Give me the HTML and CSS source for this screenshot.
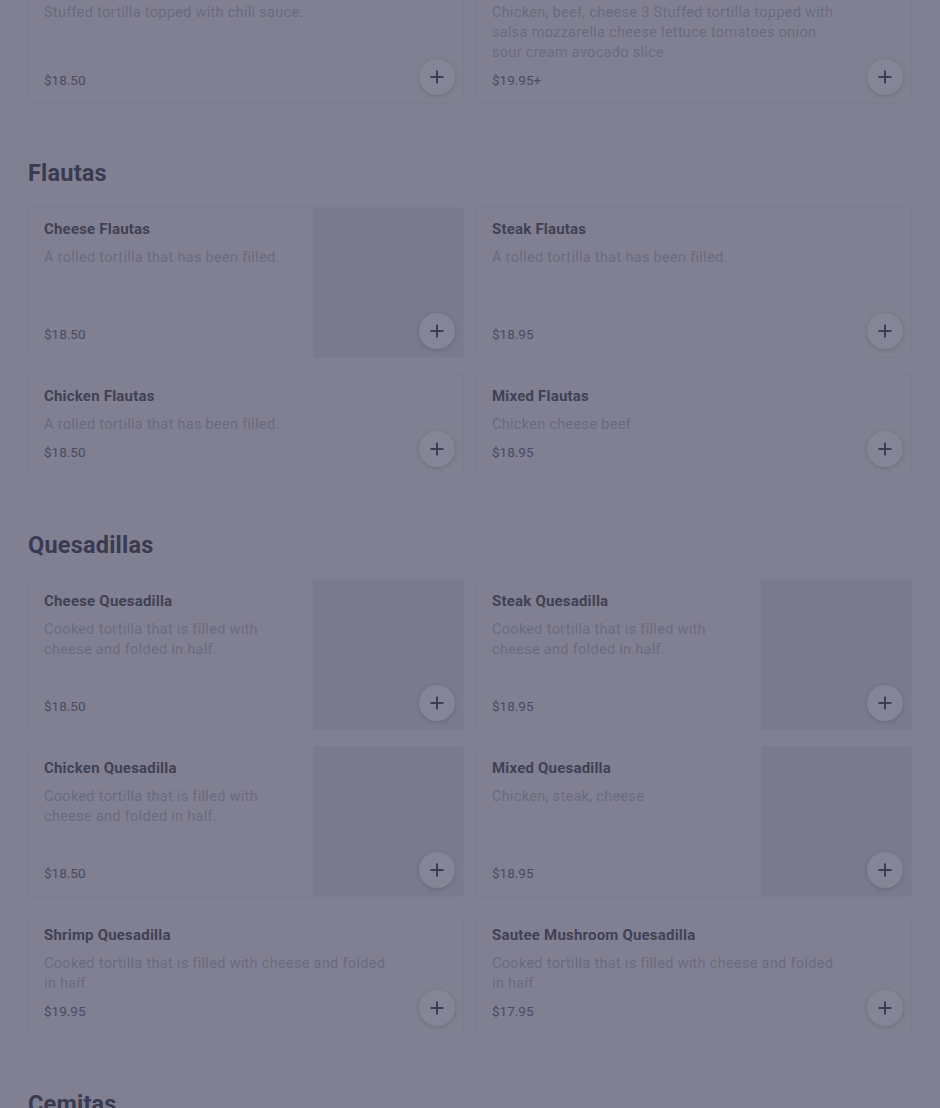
FILE: index.html
```html
<!DOCTYPE html>
<html lang="en">
<head>
<meta charset="utf-8">
<title>Menu</title>
<link rel="stylesheet" href="styles.css">
</head>
<body>
<main class="menu">
  <section class="category category--continued">
    <div class="grid">
      <article class="item">
        <div class="item-body">
          <h3 class="item-name">Cheese Enchiladas</h3>
          <p class="item-desc">Stuffed tortilla topped with chili sauce.</p>
          <p class="item-price">$18.50</p>
        </div>
        <button class="add" aria-label="Add"><svg viewBox="0 0 16 16"><path d="M8 1.5v13M1.5 8h13"/></svg></button>
      </article>
      <article class="item">
        <div class="item-body">
          <h3 class="item-name">Enchiladas Supreme</h3>
          <p class="item-desc">Chicken, beef, cheese 3 Stuffed tortilla topped with salsa mozzarella cheese lettuce tomatoes onion sour cream avocado slice</p>
          <p class="item-price">$19.95+</p>
        </div>
        <button class="add" aria-label="Add"><svg viewBox="0 0 16 16"><path d="M8 1.5v13M1.5 8h13"/></svg></button>
      </article>
    </div>
  </section>

  <section class="category">
    <h2 class="category-title">Flautas</h2>
    <div class="grid">
      <article class="item item--photo">
        <div class="item-body">
          <h3 class="item-name">Cheese Flautas</h3>
          <p class="item-desc">A rolled tortilla that has been filled.</p>
          <p class="item-price">$18.50</p>
        </div>
        <div class="item-photo"></div>
        <button class="add" aria-label="Add"><svg viewBox="0 0 16 16"><path d="M8 1.5v13M1.5 8h13"/></svg></button>
      </article>
      <article class="item">
        <div class="item-body">
          <h3 class="item-name">Steak Flautas</h3>
          <p class="item-desc">A rolled tortilla that has been filled.</p>
          <p class="item-price">$18.95</p>
        </div>
        <button class="add" aria-label="Add"><svg viewBox="0 0 16 16"><path d="M8 1.5v13M1.5 8h13"/></svg></button>
      </article>
      <article class="item">
        <div class="item-body">
          <h3 class="item-name">Chicken Flautas</h3>
          <p class="item-desc">A rolled tortilla that has been filled.</p>
          <p class="item-price">$18.50</p>
        </div>
        <button class="add" aria-label="Add"><svg viewBox="0 0 16 16"><path d="M8 1.5v13M1.5 8h13"/></svg></button>
      </article>
      <article class="item">
        <div class="item-body">
          <h3 class="item-name">Mixed Flautas</h3>
          <p class="item-desc">Chicken cheese beef</p>
          <p class="item-price">$18.95</p>
        </div>
        <button class="add" aria-label="Add"><svg viewBox="0 0 16 16"><path d="M8 1.5v13M1.5 8h13"/></svg></button>
      </article>
    </div>
  </section>

  <section class="category">
    <h2 class="category-title">Quesadillas</h2>
    <div class="grid">
      <article class="item item--photo">
        <div class="item-body">
          <h3 class="item-name">Cheese Quesadilla</h3>
          <p class="item-desc">Cooked tortilla that is filled with cheese and folded in half.</p>
          <p class="item-price">$18.50</p>
        </div>
        <div class="item-photo"></div>
        <button class="add" aria-label="Add"><svg viewBox="0 0 16 16"><path d="M8 1.5v13M1.5 8h13"/></svg></button>
      </article>
      <article class="item item--photo">
        <div class="item-body">
          <h3 class="item-name">Steak Quesadilla</h3>
          <p class="item-desc">Cooked tortilla that is filled with cheese and folded in half.</p>
          <p class="item-price">$18.95</p>
        </div>
        <div class="item-photo"></div>
        <button class="add" aria-label="Add"><svg viewBox="0 0 16 16"><path d="M8 1.5v13M1.5 8h13"/></svg></button>
      </article>
      <article class="item item--photo">
        <div class="item-body">
          <h3 class="item-name">Chicken Quesadilla</h3>
          <p class="item-desc">Cooked tortilla that is filled with cheese and folded in half.</p>
          <p class="item-price">$18.50</p>
        </div>
        <div class="item-photo"></div>
        <button class="add" aria-label="Add"><svg viewBox="0 0 16 16"><path d="M8 1.5v13M1.5 8h13"/></svg></button>
      </article>
      <article class="item item--photo">
        <div class="item-body">
          <h3 class="item-name">Mixed Quesadilla</h3>
          <p class="item-desc">Chicken, steak, cheese</p>
          <p class="item-price">$18.95</p>
        </div>
        <div class="item-photo"></div>
        <button class="add" aria-label="Add"><svg viewBox="0 0 16 16"><path d="M8 1.5v13M1.5 8h13"/></svg></button>
      </article>
      <article class="item">
        <div class="item-body">
          <h3 class="item-name">Shrimp Quesadilla</h3>
          <p class="item-desc">Cooked tortilla that is filled with cheese and folded in half.</p>
          <p class="item-price">$19.95</p>
        </div>
        <button class="add" aria-label="Add"><svg viewBox="0 0 16 16"><path d="M8 1.5v13M1.5 8h13"/></svg></button>
      </article>
      <article class="item">
        <div class="item-body">
          <h3 class="item-name">Sautee Mushroom Quesadilla</h3>
          <p class="item-desc">Cooked tortilla that is filled with cheese and folded in half.</p>
          <p class="item-price">$17.95</p>
        </div>
        <button class="add" aria-label="Add"><svg viewBox="0 0 16 16"><path d="M8 1.5v13M1.5 8h13"/></svg></button>
      </article>
    </div>
  </section>

  <section class="category">
    <h2 class="category-title">Cemitas</h2>
  </section>
</main>
</body>
</html>
```

FILE: styles.css
```css
* {
  box-sizing: border-box;
}

html, body {
  margin: 0;
  padding: 0;
}

body {
  background: #808092;
  font-family: Roboto, "Noto Sans", sans-serif;
  color: #404055;
  overflow: hidden;
}

.menu {
  padding: 0 28px;
}

.category {
  margin-top: 55px;
}

.category--continued {
  margin-top: -38px;
}

.category-title {
  margin: 0 0 20px;
  font-size: 23.5px;
  line-height: 28px;
  font-weight: 700;
  color: #3a3a50;
  letter-spacing: 0.2px;
}

.grid {
  display: grid;
  grid-template-columns: 1fr 1fr;
  column-gap: 12px;
  row-gap: 16px;
}

.item {
  position: relative;
  display: flex;
  border: 1px solid #7c7c8f;
  border-radius: 2px;
  background: #808092;
}

.item-body {
  flex: 1;
  min-width: 0;
  display: flex;
  flex-direction: column;
  padding: 11px 68px 13px 15px;
}

.item--photo .item-body {
  padding-right: 16px;
}

.item-name {
  margin: 0;
  font-size: 15px;
  line-height: 20px;
  font-weight: 700;
  letter-spacing: 0.2px;
  color: #414156;
}

.item-desc {
  margin: 9px 0 0;
  font-size: 14.5px;
  line-height: 20px;
  letter-spacing: 0.3px;
  color: #6a6a7f;
}

.item-price {
  margin: auto 0 0;
  padding-top: 7px;
  font-size: 13.5px;
  line-height: 20px;
  color: #4b4b60;
}

.item-photo {
  flex: none;
  width: 150px;
  height: 149px;
  background: #7a7a8d;
}

.add {
  position: absolute;
  right: 8px;
  bottom: 8px;
  width: 36px;
  height: 36px;
  padding: 0;
  border: none;
  border-radius: 50%;
  background: #858597;
  box-shadow: 0 1px 4px rgba(40, 40, 60, 0.22);
  display: flex;
  align-items: center;
  justify-content: center;
}

.add svg {
  width: 16px;
  height: 16px;
  fill: none;
  stroke: #3d3d52;
  stroke-width: 2;
}
```
